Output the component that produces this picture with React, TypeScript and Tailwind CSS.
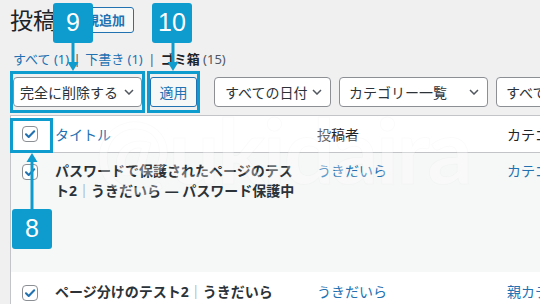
import React from "react";

function Checkbox() {
  return (
    <span className="flex h-4 w-4 flex-none items-center justify-center rounded-[4px] border border-[#8c8f94] bg-white">
      <svg viewBox="0 0 14 14" className="h-[14px] w-[14px]">
        <path
          d="M3 7.3l2.7 2.6L11.2 4.3"
          fill="none"
          stroke="#2271b1"
          strokeWidth="2.1"
          strokeLinecap="round"
          strokeLinejoin="round"
        />
      </svg>
    </span>
  );
}

function Chevron() {
  return (
    <svg viewBox="0 0 10 6" className="h-[6px] w-[10px] flex-none">
      <path d="M1 1l4 4 4-4" fill="none" stroke="#50575e" strokeWidth="1.5" />
    </svg>
  );
}

function Badge({ n, className }: { n: string; className: string }) {
  return (
    <div
      className={`absolute flex h-[40px] w-[40px] items-center justify-center rounded-[3px] bg-[#0e9bce] font-['Liberation_Sans',sans-serif] text-[25px] text-white ${className}`}
    >
      {n}
    </div>
  );
}

function Sep() {
  return <span className="font-normal text-[#8c8f94]">｜</span>;
}

export default function App() {
  return (
    <div className="relative h-[304px] w-[540px] overflow-hidden bg-[#f0f0f1] font-['Noto_Sans','Noto_Sans_CJK_JP',sans-serif] text-[#2c3338]">
      <div className="pl-[10px] pt-[7px]">
        {/* page title */}
        <div className="flex h-[26px] items-center">
          <h1 className="text-[23px] leading-[26px] text-[#1d2327]">投稿</h1>
          <button className="ml-[8px] h-[26px] rounded-[3px] border border-[#2271b1] bg-[#f6f7f7] px-[8px] text-[13px] font-semibold leading-[24px] text-[#2271b1]">
            新規追加
          </button>
        </div>

        {/* status links */}
        <div className="ml-[3px] mt-[17px] flex h-[20px] items-center whitespace-pre text-[13px] text-[#50575e]">
          <span className="text-[#2271b1]">すべて (1)</span>
          <span className="px-[1px]"> | </span>
          <span className="text-[#2271b1]">下書き (1)</span>
          <span className="px-[2px]"> | </span>
          <span className="font-bold text-[#1d2327]">ゴミ箱</span>
          <span> (15)</span>
        </div>

        {/* bulk actions + filters */}
        <div className="mt-[1px] flex items-center text-[14px]">
          <div className="flex-none border-[3px] border-[#0e9bce] py-[3px]">
            <div className="flex h-[30px] w-[129px] items-center justify-between rounded-[4px] border border-[#8c8f94] bg-white pl-[6px] pr-[7px]">
              <span>完全に削除する</span>
              <Chevron />
            </div>
          </div>
          <div className="ml-[2px] flex-none border-[3px] border-[#0e9bce] py-[3px]">
            <div className="flex h-[30px] w-[47px] items-center justify-center rounded-[3px] border border-[#2271b1] bg-[#f6f7f7] text-[#2271b1]">
              適用
            </div>
          </div>
          <div className="ml-[14px] flex h-[30px] w-[117px] flex-none items-center justify-between rounded-[4px] border border-[#8c8f94] bg-white pl-[10px] pr-[8px]">
            <span>すべての日付</span>
            <Chevron />
          </div>
          <div className="ml-[8px] flex h-[30px] w-[149px] flex-none items-center justify-between rounded-[4px] border border-[#8c8f94] bg-white pl-[9px] pr-[8px]">
            <span>カテゴリー一覧</span>
            <Chevron />
          </div>
          <div className="ml-[8px] flex h-[30px] w-[150px] flex-none items-center justify-between rounded-[4px] border border-[#8c8f94] bg-white pl-[9px] pr-[8px]">
            <span>すべての形式</span>
            <Chevron />
          </div>
        </div>

        {/* posts table */}
        <div className="mt-[2px] w-[700px] border-l border-t border-[#c3c4c7] bg-white text-[14px]">
          <div className="flex h-[37px] items-center border-b border-[#c3c4c7]">
            <div className="w-[34px] flex-none pl-[11px]">
              <Checkbox />
            </div>
            <div className="w-[262px] flex-none pl-[10px] text-[#2271b1]">タイトル</div>
            <div className="w-[190px] flex-none pl-[10px] text-[#1d2327]">投稿者</div>
            <div className="pl-[10px] text-[#1d2327]">カテゴリー</div>
          </div>

          <div className="flex h-[119px] items-start bg-[#f6f7f7] leading-[20px]">
            <div className="w-[34px] flex-none pl-[11px] pt-[11px]">
              <Checkbox />
            </div>
            <div className="w-[262px] flex-none whitespace-nowrap px-[10px] pt-[8px] font-bold text-[#2c3338]">
              パスワードで保護されたページのテス
              <br />
              ト2<Sep />うきだいら — パスワード保護中
            </div>
            <div className="w-[190px] flex-none pl-[10px] pt-[8px] text-[#2271b1]">うきだいら</div>
            <div className="pl-[10px] pt-[8px] text-[#2271b1]">カテゴリー1</div>
          </div>

          <div className="flex h-[40px] items-start leading-[20px]">
            <div className="w-[34px] flex-none pl-[11px] pt-[13px]">
              <Checkbox />
            </div>
            <div className="w-[262px] flex-none px-[10px] pt-[10px] font-bold text-[#2c3338]">
              ページ分けのテスト2<Sep />うきだいら
            </div>
            <div className="w-[190px] flex-none pl-[10px] pt-[10px] text-[#2271b1]">うきだいら</div>
            <div className="pl-[10px] pt-[10px] text-[#2271b1]">親カテゴリー</div>
          </div>
        </div>
      </div>

      {/* faint watermark */}
      <div className="pointer-events-none absolute left-[95px] top-[104px] whitespace-nowrap font-['Lato',sans-serif] text-[90px] font-bold leading-none tracking-tight text-white/30 [-webkit-text-stroke:1px_rgba(0,0,0,0.018)]">
        @ukidaira
      </div>

      {/* annotation overlay */}
      <div className="absolute left-[10px] top-[118px] h-[35px] w-[43px] border-[3px] border-[#0e9bce]" />
      <svg className="pointer-events-none absolute left-0 top-0 h-[304px] w-[540px]" viewBox="0 0 540 304">
        <g fill="#0e9bce">
          <rect x="71.5" y="42" width="3" height="21" />
          <path d="M67.5 62 L78.5 62 L73 71 Z" />
          <rect x="171.5" y="42" width="3" height="21" />
          <path d="M167.5 62 L178.5 62 L173 71 Z" />
          <rect x="30.5" y="161" width="3" height="49" />
          <path d="M26.5 162 L37.5 162 L32 153 Z" />
        </g>
      </svg>
      <Badge n="9" className="left-[53px] top-[3px]" />
      <Badge n="10" className="left-[152px] top-[3px]" />
      <Badge n="8" className="left-[12px] top-[209px]" />
    </div>
  );
}
